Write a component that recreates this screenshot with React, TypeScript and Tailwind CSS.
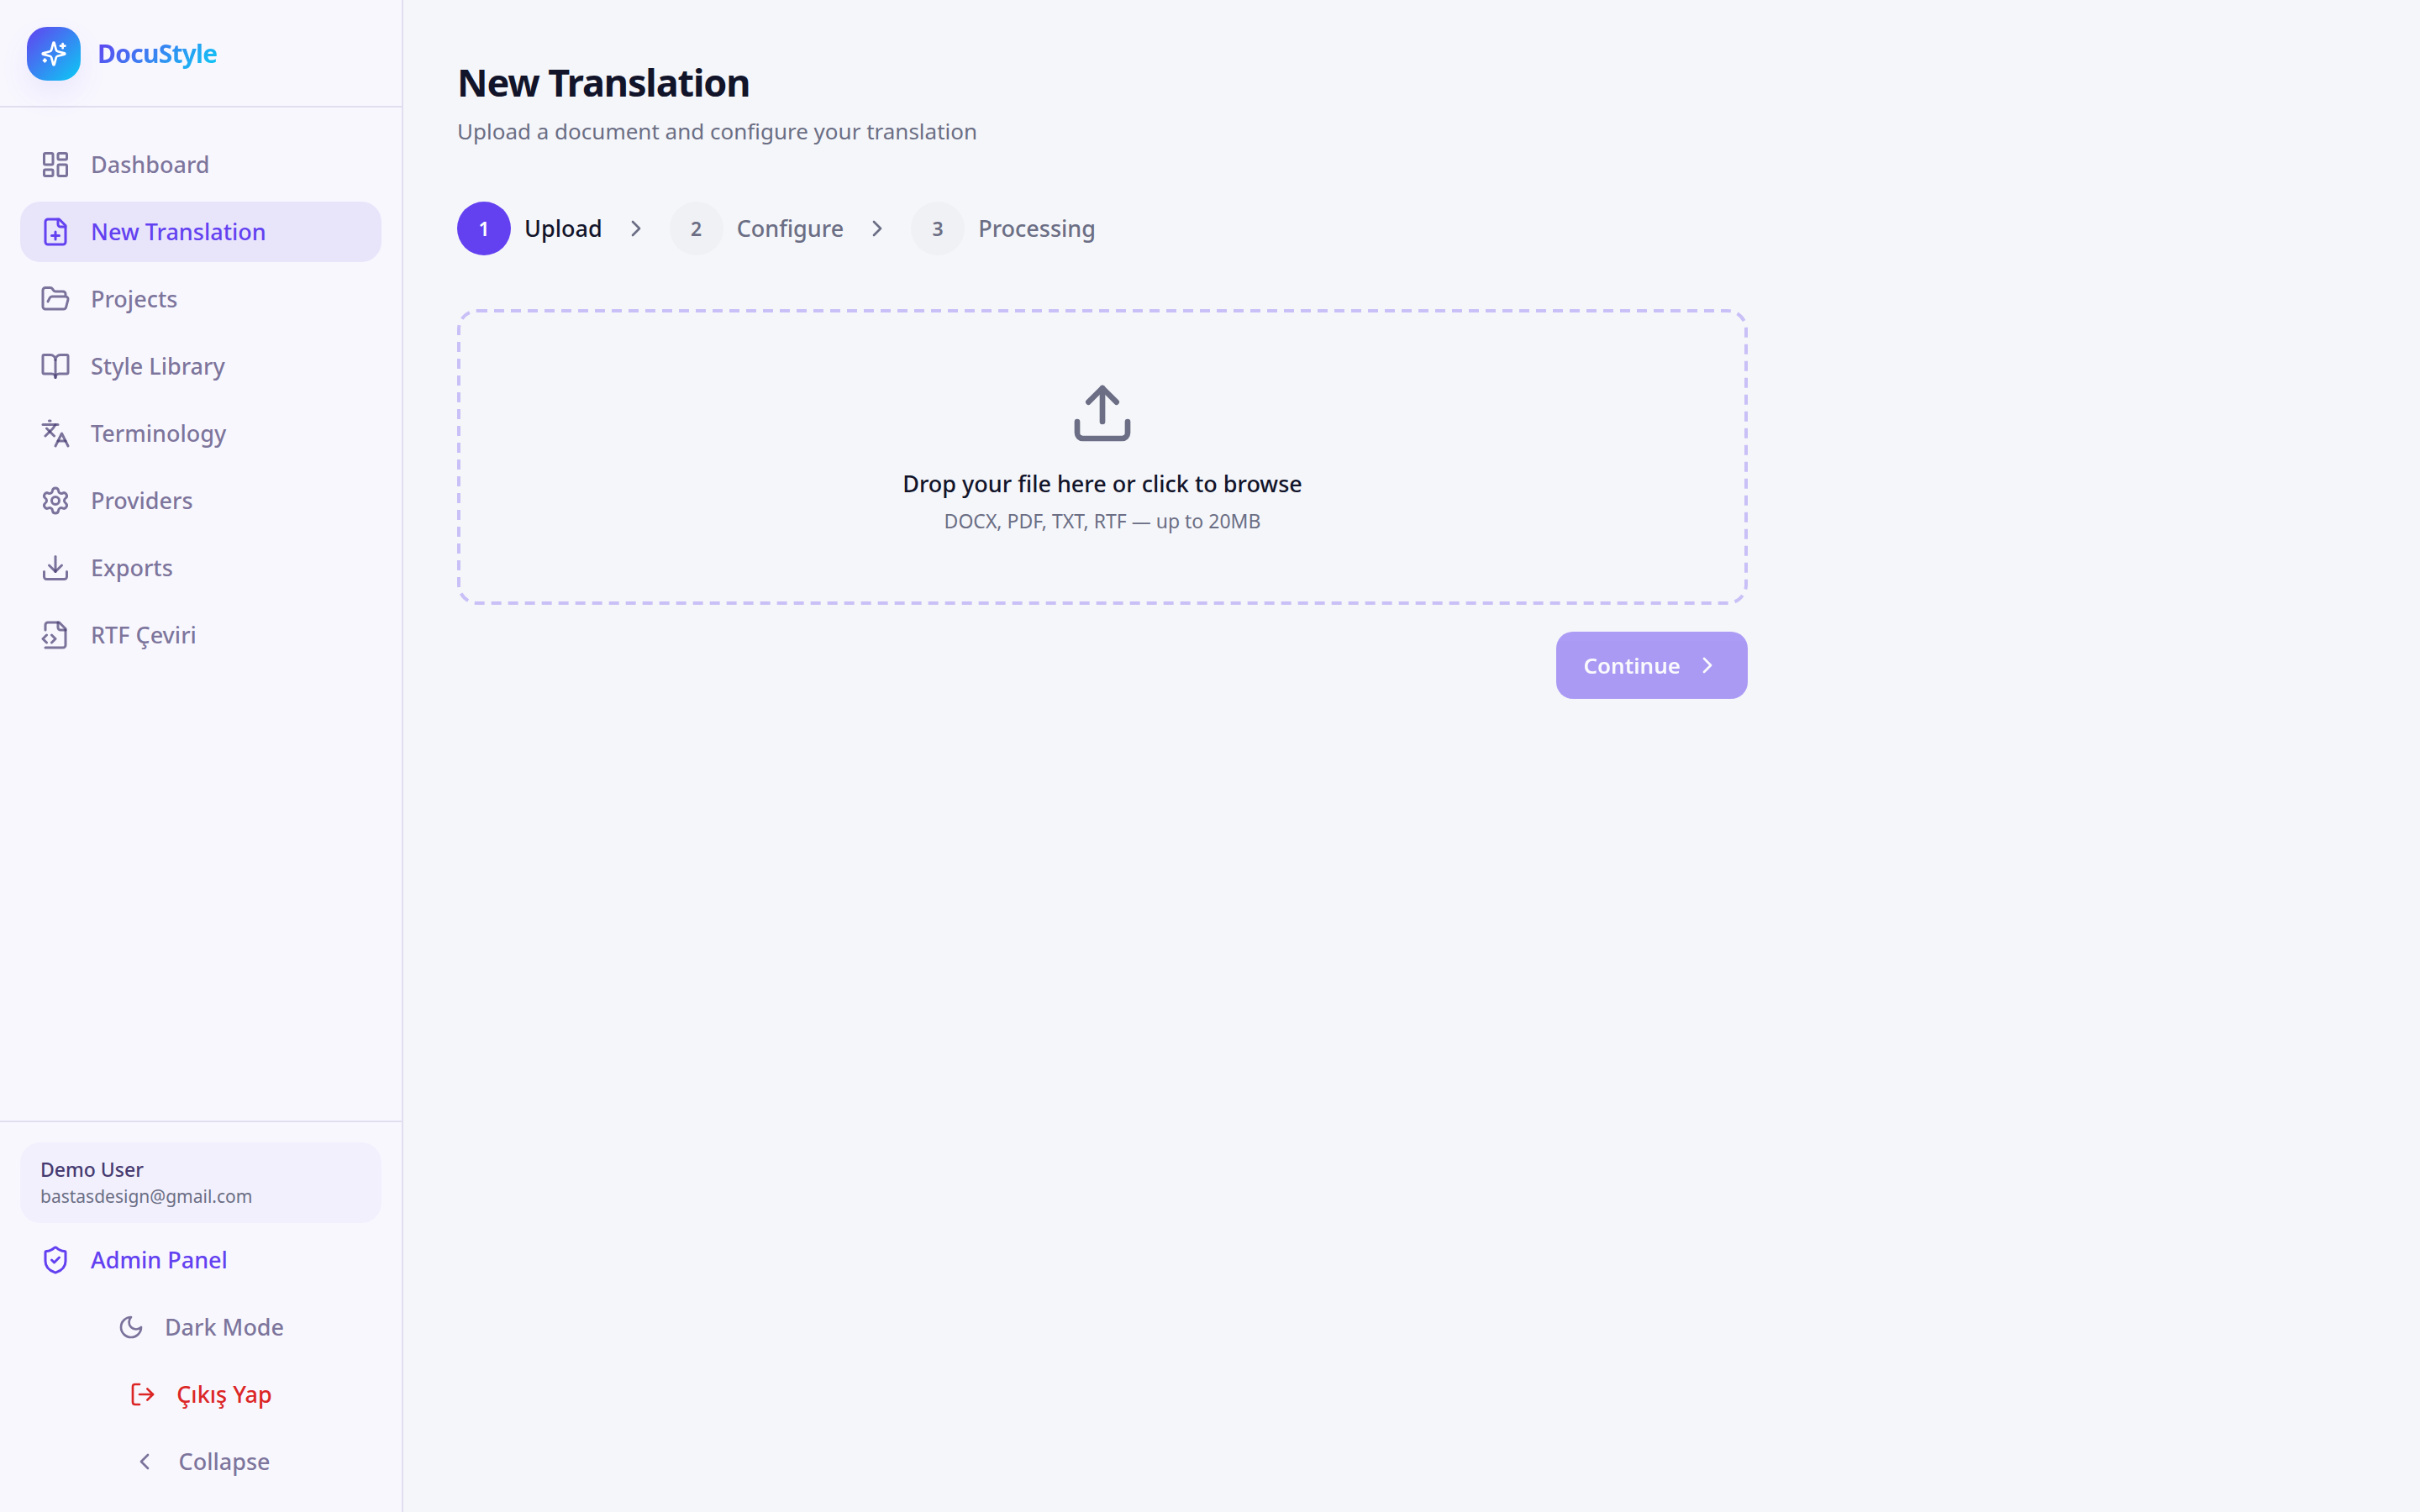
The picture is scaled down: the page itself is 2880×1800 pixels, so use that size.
import React, { useState } from 'react';
import {
  BookOpen,
  ChevronLeft,
  ChevronRight,
  Download,
  FolderOpen,
  Languages,
  LayoutDashboard,
  LogOut,
  Settings,
  ShieldCheck,
  Upload,
} from 'lucide-react';

interface IconProps {
  className?: string;
}

interface NavItem {
  label: string;
  icon: React.ComponentType<IconProps>;
}

const StrokeIcon: React.FC<IconProps & { children: React.ReactNode }> = ({ className, children }) => (
  <svg
    viewBox="0 0 24 24"
    fill="none"
    stroke="currentColor"
    strokeWidth={2}
    strokeLinecap="round"
    strokeLinejoin="round"
    className={className}
    aria-hidden="true"
  >
    {children}
  </svg>
);

const SparklesIcon: React.FC<IconProps> = ({ className }) => (
  <StrokeIcon className={className}>
    <path d="M9.937 15.5A2 2 0 0 0 8.5 14.063l-6.135-1.582a.5.5 0 0 1 0-.962L8.5 9.936A2 2 0 0 0 9.937 8.5l1.582-6.135a.5.5 0 0 1 .963 0L14.063 8.5A2 2 0 0 0 15.5 9.937l6.135 1.581a.5.5 0 0 1 0 .964L15.5 14.063a2 2 0 0 0-1.437 1.437l-1.582 6.135a.5.5 0 0 1-.963 0z" />
    <path d="M20 3v4" />
    <path d="M22 5h-4" />
    <path d="M4 17v2" />
    <path d="M5 18H3" />
  </StrokeIcon>
);

const FilePlusIcon: React.FC<IconProps> = ({ className }) => (
  <StrokeIcon className={className}>
    <path d="M15 2H6a2 2 0 0 0-2 2v16a2 2 0 0 0 2 2h12a2 2 0 0 0 2-2V7Z" />
    <path d="M14 2v4a2 2 0 0 0 2 2h4" />
    <path d="M9 15h6" />
    <path d="M12 18v-6" />
  </StrokeIcon>
);

const FileCodeIcon: React.FC<IconProps> = ({ className }) => (
  <StrokeIcon className={className}>
    <path d="M4 22h14a2 2 0 0 0 2-2V7l-5-5H6a2 2 0 0 0-2 2v4" />
    <path d="M14 2v4a2 2 0 0 0 2 2h4" />
    <path d="m5 12-3 3 3 3" />
    <path d="m9 18 3-3-3-3" />
  </StrokeIcon>
);

const MoonIcon: React.FC<IconProps> = ({ className }) => (
  <StrokeIcon className={className}>
    <path d="M12 3a6 6 0 0 0 9 9 9 9 0 1 1-9-9Z" />
  </StrokeIcon>
);

const NAV_ITEMS: NavItem[] = [
  { label: 'Dashboard', icon: LayoutDashboard },
  { label: 'New Translation', icon: FilePlusIcon },
  { label: 'Projects', icon: FolderOpen },
  { label: 'Style Library', icon: BookOpen },
  { label: 'Terminology', icon: Languages },
  { label: 'Providers', icon: Settings },
  { label: 'Exports', icon: Download },
  { label: 'RTF Çeviri', icon: FileCodeIcon },
];

const STEPS = ['Upload', 'Configure', 'Processing'];

const Sidebar: React.FC = () => {
  const [active, setActive] = useState('New Translation');

  return (
    <aside className="w-[480px] shrink-0 flex flex-col bg-[#f8f7fe] border-r-2 border-[#e1deef]">
      <div className="h-32 flex items-center gap-5 px-8 pt-0.5 border-b-2 border-[#e1deef]">
        <div className="size-16 rounded-3xl bg-linear-135/srgb from-[#6341f0] to-[#0bcbf4] flex items-center justify-center shadow-[0_16px_40px_-8px_rgba(99,65,240,0.15)]">
          <SparklesIcon className="size-8 text-white" />
        </div>
        <span className="text-[30px] leading-10 font-bold tracking-tight bg-linear-135/srgb from-[#6341f0] to-[#0bcbf4] bg-clip-text text-transparent">
          DocuStyle
        </span>
      </div>

      <nav className="flex-1 flex flex-col gap-2 px-6 py-8">
        {NAV_ITEMS.map(({ label, icon: Icon }) => (
          <a
            key={label}
            href="#"
            onClick={() => setActive(label)}
            aria-current={active === label ? 'page' : undefined}
            className={`flex items-center gap-6 h-18 px-6 rounded-3xl text-[27px] leading-10 font-medium ${
              active === label ? 'bg-[#e8e5fb] text-[#6341f0]' : 'text-[#463a70]/70'
            }`}
          >
            <Icon className="size-9 shrink-0" />
            <span>{label}</span>
          </a>
        ))}
      </nav>

      <div className="flex flex-col gap-2 p-6 border-t-2 border-[#e1deef]">
        <div className="h-24 flex flex-col justify-center px-6 rounded-3xl bg-[#f2f0fd]">
          <p className="text-[23px] leading-8 font-medium text-[#463a70]">Demo User</p>
          <p className="text-[21px] leading-8 text-[#6b6e84]">bastasdesign@gmail.com</p>
        </div>
        <a href="#" className="flex items-center gap-6 h-18 px-6 rounded-3xl text-[27px] leading-10 font-medium text-[#6341f0]">
          <ShieldCheck className="size-9 shrink-0" />
          <span>Admin Panel</span>
        </a>
        <button className="flex items-center justify-center gap-6 h-18 rounded-3xl text-[27px] leading-10 font-medium text-[#463a70]/70">
          <MoonIcon className="size-8" />
          Dark Mode
        </button>
        <button className="flex items-center justify-center gap-6 h-18 rounded-3xl text-[27px] leading-10 font-medium text-[#dc2626]">
          <LogOut className="size-8" />
          Çıkış Yap
        </button>
        <button className="flex items-center justify-center gap-6 h-18 rounded-3xl text-[27px] leading-10 font-medium text-[#463a70]/70">
          <ChevronLeft className="size-8" />
          Collapse
        </button>
      </div>
    </aside>
  );
};

const Stepper: React.FC<{ current: number }> = ({ current }) => (
  <ol className="flex items-center gap-6">
    {STEPS.map((step, i) => (
      <li key={step} className="flex items-center gap-6">
        {i > 0 && <ChevronRight className="size-8 text-[#6b6e84]" />}
        <div className="flex items-center gap-4">
          <span
            className={`size-16 rounded-full flex items-center justify-center text-[23px] leading-8 font-semibold ${
              i === current ? 'bg-[#6341f0] text-white' : 'bg-[#f0f1f4] text-[#6b6e84]'
            }`}
          >
            {i + 1}
          </span>
          <span
            className={`text-[27px] leading-10 font-medium ${i === current ? 'text-[#12142a]' : 'text-[#6b6e84]'}`}
          >
            {step}
          </span>
        </div>
      </li>
    ))}
  </ol>
);

export default function App() {
  return (
    <div className="min-h-screen flex bg-[#f5f6fa] font-['Noto_Sans','Open_Sans',sans-serif]">
      <Sidebar />

      <main className="flex-1 p-16">
        <div className="max-w-[1536px] flex flex-col">
          <h1 className="text-[45px] leading-[68px] font-bold tracking-tight text-[#12142a]">New Translation</h1>
          <p className="mt-1 text-[26px] leading-10 text-[#6b6e84]">
            Upload a document and configure your translation
          </p>

          <div className="mt-16">
            <Stepper current={0} />
          </div>

          <label className="relative mt-16 flex flex-col items-center p-[84px] cursor-pointer">
            {/* dashed outline: 12px dashes, 8px gaps */}
            <svg className="absolute inset-0 size-full p-0.5 overflow-visible" fill="none" aria-hidden="true">
              <rect width="100%" height="100%" rx="22" stroke="#c9c0f7" strokeWidth="4" strokeDasharray="12 8" />
            </svg>
            <input type="file" accept=".docx,.pdf,.txt,.rtf" className="sr-only" />
            <Upload className="size-20 text-[#6b6e84]" />
            <span className="mt-6 text-[27px] leading-10 font-medium text-[#12142a]">
              Drop your file here or click to browse
            </span>
            <span className="mt-2 text-[23px] leading-8 text-[#6b6e84]">DOCX, PDF, TXT, RTF — up to 20MB</span>
          </label>

          <button
            disabled
            className="mt-8 self-end h-20 px-8 flex items-center gap-4 rounded-[20px] bg-[#6341f0] text-white text-[26px] leading-10 font-semibold opacity-50"
          >
            Continue
            <ChevronRight className="size-8" />
          </button>
        </div>
      </main>
    </div>
  );
}
